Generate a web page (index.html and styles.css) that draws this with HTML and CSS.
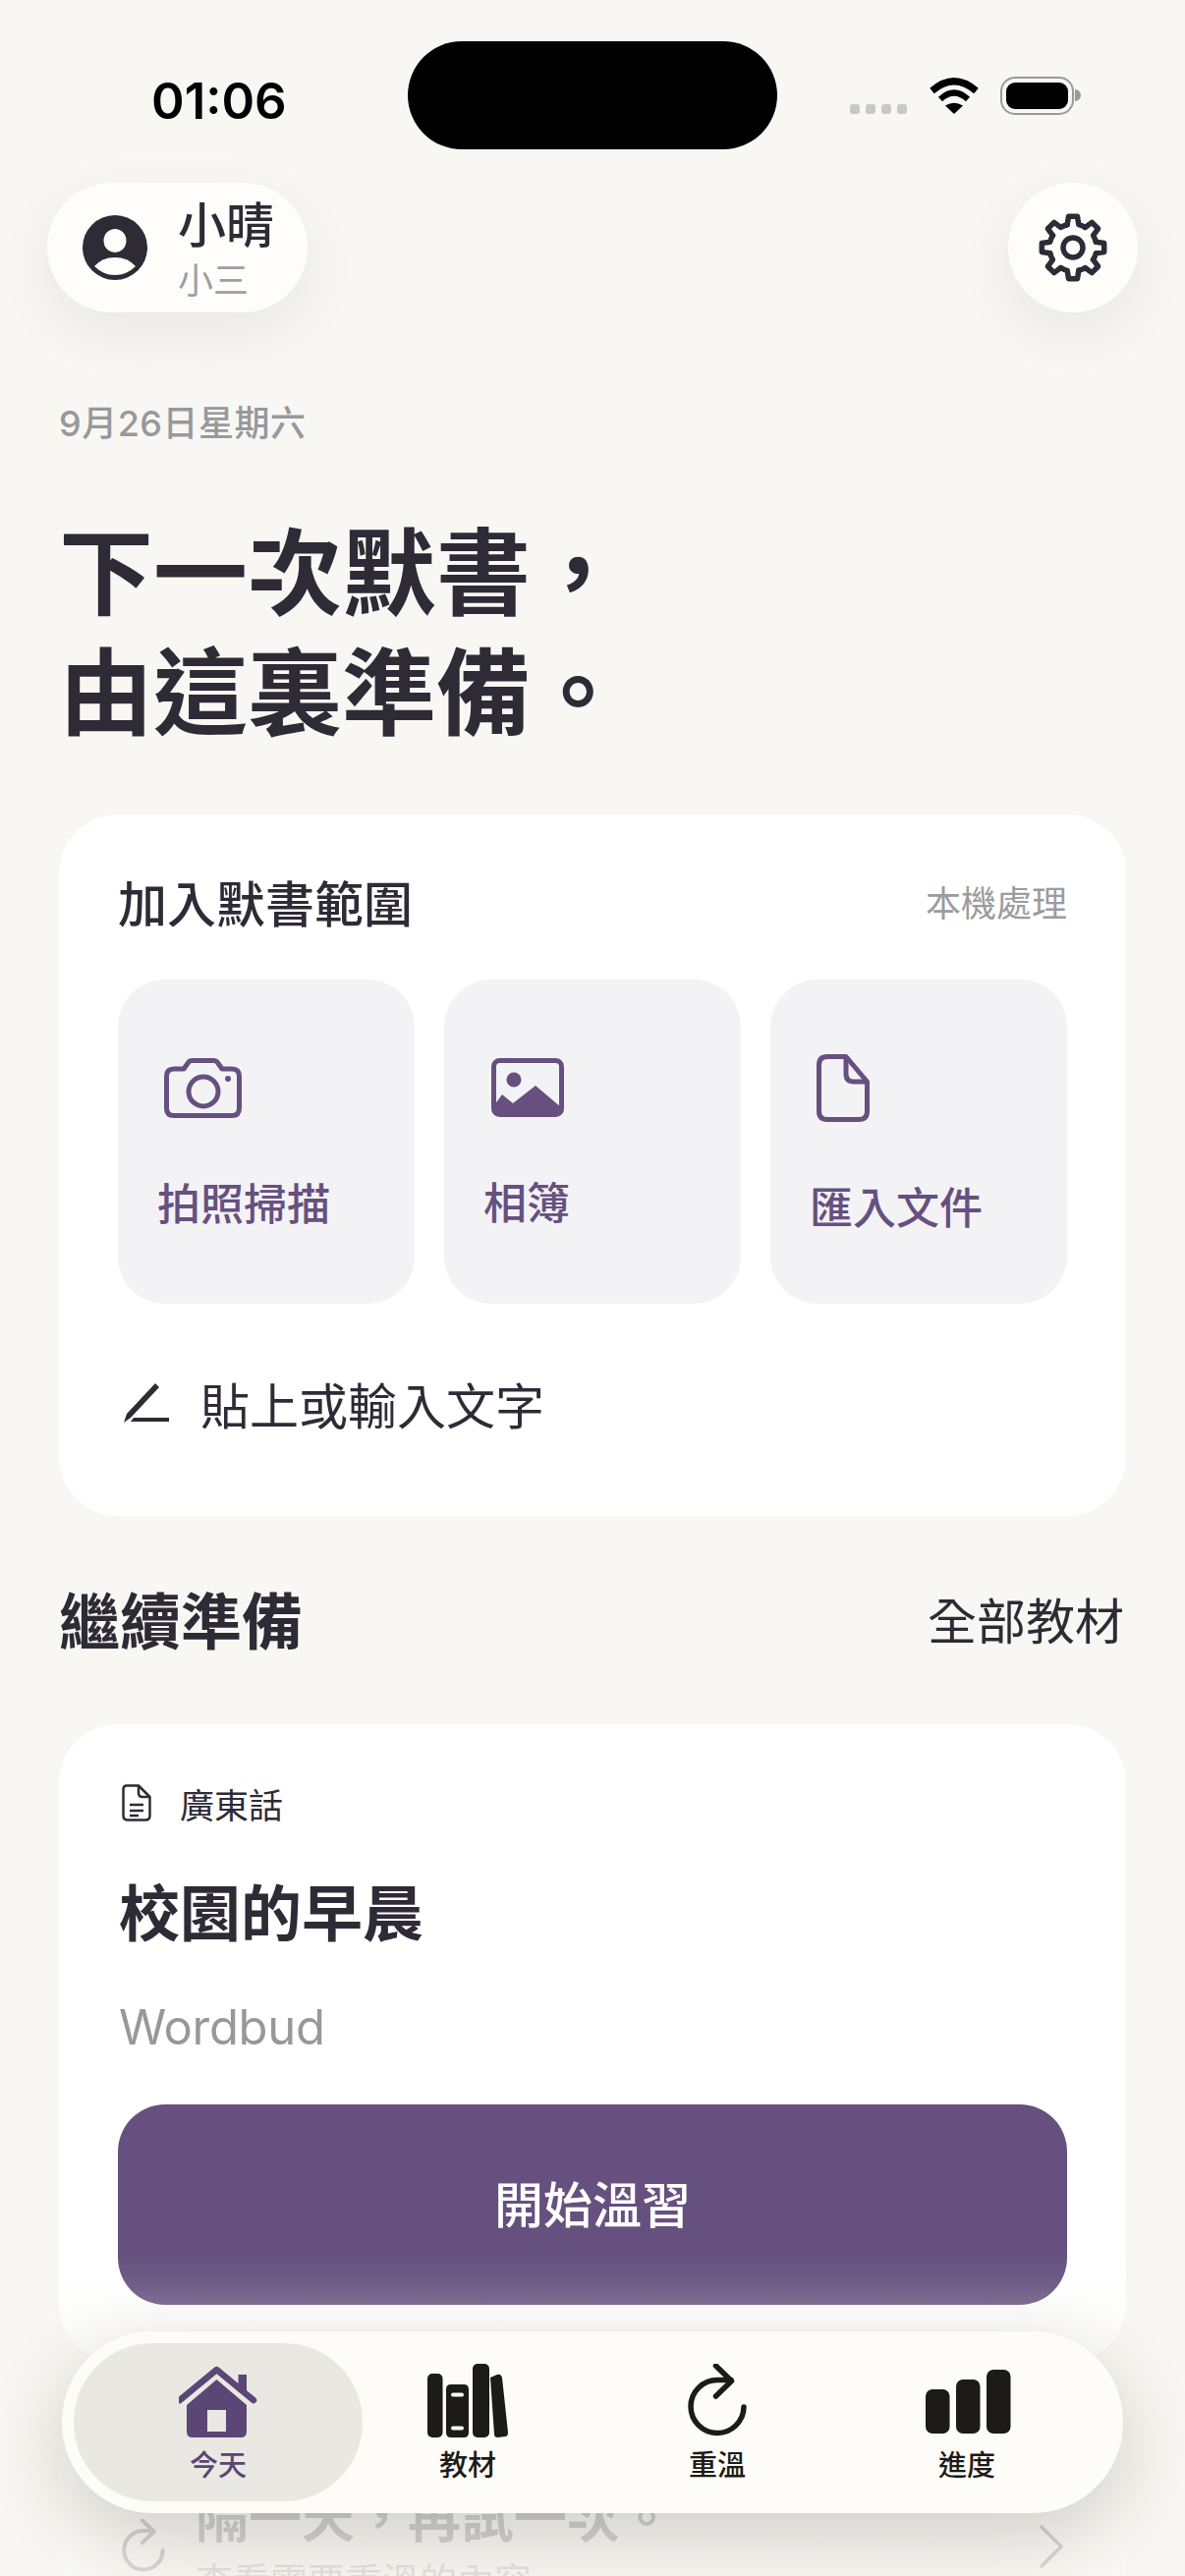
FILE: index.html
```html
<!DOCTYPE html>
<html lang="zh-Hant">
<head>
    <meta charset="UTF-8">
    <meta name="viewport" content="width=device-width, initial-scale=1.0">
    <title>Wordbud</title>
    <link rel="stylesheet" href="styles.css">
</head>
<body>
<div class="page">
    <div class="status">
        <div class="status-time">01:06</div>
        <div class="island"></div>
        <div class="status-icons">
            <div class="dots"><span></span><span></span><span></span><span></span></div>
            <svg class="wifi" width="50" height="37" viewBox="0 0 50 37">
                <path d="M2.5 13.5Q25-6 47.5 13.5" fill="none" stroke="#000" stroke-width="7"/>
                <path d="M11 22Q25 9 39 22" fill="none" stroke="#000" stroke-width="6"/>
                <path d="M25 37L16 28.5Q25 23 34 28.5Z" fill="#000"/>
            </svg>
            <div class="battery"><div class="battery-fill"></div></div>
            <div class="battery-cap"></div>
        </div>
    </div>

    <div class="top-row">
        <div class="profile">
            <svg width="66" height="66" viewBox="0 0 66 66">
                <circle cx="33" cy="33" r="33" fill="#2e2b36"/>
                <ellipse cx="33" cy="26" rx="11.5" ry="12" fill="#fefdfa"/>
                <path d="M12 52Q20 43 33 43Q46 43 54 52Q45 61 33 61Q21 61 12 52Z" fill="#fefdfa"/>
            </svg>
            <div class="profile-text">
                <div class="profile-name">小晴</div>
                <div class="profile-sub">小三</div>
            </div>
        </div>
        <div class="gear-btn">
            <svg width="72" height="72" viewBox="-36 -36 72 72" fill="none" stroke="#2e2b36" stroke-width="5.500" stroke-linejoin="round" stroke-linecap="round">
                <defs><path id="cog" d="M-5.8-23.3L-4.5-31.7H4.5L5.8-23.3A24 24 0 0 1 12.36-20.57"/></defs>
                <use href="#cog"/>
                <use href="#cog" transform="rotate(45)"/>
                <use href="#cog" transform="rotate(90)"/>
                <use href="#cog" transform="rotate(135)"/>
                <use href="#cog" transform="rotate(180)"/>
                <use href="#cog" transform="rotate(225)"/>
                <use href="#cog" transform="rotate(270)"/>
                <use href="#cog" transform="rotate(315)"/>
                <circle r="10"/>
            </svg>
        </div>
    </div>

    <div class="date">9月26日星期六</div>
    <h1 class="headline">下一次默書，<br>由這裏準備。</h1>

    <section class="card add-card">
        <div class="card-head">
            <div class="card-title">加入默書範圍</div>
            <div class="card-note">本機處理</div>
        </div>
        <div class="tiles">
            <div class="tile">
                <svg class="tile-icon icon-camera" width="79" height="61" viewBox="0 0 79 61" fill="none" stroke="#67507f" stroke-width="5">
                    <path d="M10 11H20L25 4Q26 2.5 28 2.5H51Q53 2.5 54 4L59 11H69Q76.500 11 76.500 18.500V51Q76.500 58.500 69 58.500H10Q2.500 58.500 2.500 51V18.500Q2.500 11 10 11Z" stroke-linejoin="round"/>
                    <circle cx="40" cy="34" r="15"/>
                    <circle cx="65" cy="21" r="3" fill="#67507f" stroke="none"/>
                </svg>
                <div class="tile-label">拍照掃描</div>
            </div>
            <div class="tile">
                <svg class="tile-icon icon-photo" width="74" height="60" viewBox="0 0 74 60" fill="none" stroke="#67507f" stroke-width="5">
                    <rect x="2.500" y="2.500" width="69" height="55" rx="6"/>
                    <circle cx="23" cy="22" r="7.500" fill="#67507f" stroke="none"/>
                    <path d="M3 48L11 37L22 46L45 28L71 50V52Q71 57 66 57H8Q3 57 3 52Z" fill="#67507f" stroke="none"/>
                </svg>
                <div class="tile-label">相簿</div>
            </div>
            <div class="tile">
                <svg class="tile-icon icon-doc" width="54" height="69" viewBox="0 0 54 69" fill="none" stroke="#67507f" stroke-width="5" stroke-linejoin="round">
                    <path d="M11 2.500H30L51.500 28V58Q51.500 66.500 43 66.500H11Q2.500 66.500 2.500 58V11Q2.500 2.500 11 2.500Z"/>
                    <path d="M30 2.500V20Q30 28 38 28H51.500"/>
                </svg>
                <div class="tile-label">匯入文件</div>
            </div>
        </div>
        <div class="paste-row">
            <svg width="50" height="42" viewBox="0 0 50 42" fill="#2e2b36">
                <path d="M1 41L4 32L33 1L37 5L8 36Z"/>
                <path d="M11 36H47V40H8Z"/>
            </svg>
            <span>貼上或輸入文字</span>
        </div>
    </section>

    <div class="section-head">
        <h2 class="section-title">繼續準備</h2>
        <div class="section-link">全部教材</div>
    </div>

    <section class="card lesson-card">
        <div class="lesson-tag">
            <svg width="30" height="38" viewBox="0 0 30 38" fill="none" stroke="#2e2b36" stroke-width="2.500" stroke-linejoin="round">
                <path d="M5 1.500H17L28.500 13V32Q28.500 36.500 24 36.500H6Q1.500 36.500 1.500 32V5Q1.500 1.500 5 1.500Z"/>
                <path d="M17 1.500V9Q17 13 21 13H28.500"/>
                <path d="M8 21H22M8 27H22M8 32H17"/>
            </svg>
            <span>廣東話</span>
        </div>
        <div class="lesson-title">校園的早晨</div>
        <div class="lesson-source">Wordbud</div>
        <div class="start-btn">開始溫習</div>
    </section>

    <section class="card retry-card">
        <svg class="retry-icon" width="44" height="54" viewBox="0 0 60 74" fill="none" stroke="#2e2b36" stroke-width="5.500" stroke-linecap="round" stroke-linejoin="round">
            <path d="M57 44A27 27 0 1 1 30 16.500H44"/>
            <path d="M28.500 2L44.500 17.500L28.500 33"/>
        </svg>
        <div class="retry-text">
            <div class="retry-title">隔一天，再試一次。</div>
            <div class="retry-sub">查看需要重溫的內容</div>
        </div>
        <svg class="chevron" width="24" height="44" viewBox="0 0 24 44" fill="none" stroke="#2e2b36" stroke-width="3.500" stroke-linecap="round" stroke-linejoin="round">
            <path d="M2 2L22 22L2 42"/>
        </svg>
    </section>

    <div class="fade"></div>

    <nav class="tabbar">
        <div class="tab tab-active">
            <svg width="81" height="76" viewBox="2 -3 81 76">
                <path d="M62.500 8H71V26H62.500Z" fill="#5b4676"/>
                <path d="M3 34L40.500 3L78 34" fill="none" stroke="#5b4676" stroke-width="6.500" stroke-linecap="round" stroke-linejoin="round"/>
                <path d="M40.500 13L71 39V66Q71 72 65 72H16Q10 72 10 66V39ZM31 44V66H50V44Z" fill="#5b4676" fill-rule="evenodd"/>
            </svg>
            <span>今天</span>
        </div>
        <div class="tab">
            <svg width="82" height="76" viewBox="0 0 82 76" fill="#1c1b17">
                <rect x="0" y="10" width="15.500" height="65" rx="5"/>
                <path d="M24 21H37Q42 21 42 26V70Q42 75 37 75H24Q19 75 19 70V26Q19 21 24 21ZM26 29.500Q24 29.500 24 31.500T26 33.500H35Q37 33.500 37 31.500T35 29.500ZM26 63.500Q24 63.500 24 65.500T26 67.500H35Q37 67.500 37 65.500T35 63.500Z" fill-rule="evenodd"/>
                <rect x="46" y="0" width="17" height="75" rx="5"/>
                <path d="M64 14L71 11Q75 10 76 14L82 70Q82 74 79 74L72 75Q68 75 68 72Z"/>
            </svg>
            <span>教材</span>
        </div>
        <div class="tab">
            <svg width="60" height="76" viewBox="0 0 60 76" fill="none" stroke="#1c1b17" stroke-width="5.500" stroke-linecap="round" stroke-linejoin="round">
                <path d="M57 44A27 27 0 1 1 30 16.500H44"/>
                <path d="M28.500 2L44.500 17.500L28.500 33"/>
            </svg>
            <span>重溫</span>
        </div>
        <div class="tab">
            <svg class="icon-bars" width="87" height="76" viewBox="0 0 87 76" fill="#1c1b17">
                <rect x="0" y="26" width="24.500" height="45" rx="7"/>
                <rect x="31" y="16" width="24.500" height="55" rx="7"/>
                <rect x="62" y="6" width="24.500" height="65" rx="7"/>
            </svg>
            <span>進度</span>
        </div>
    </nav>
</div>
</body>
</html>
```

FILE: styles.css
```css
* {
    box-sizing: border-box;
}
html, body {
    margin: 0;
    padding: 0;
}
body {
    font-family: "Noto Sans CJK TC", Inter, sans-serif;
    background-color: #f8f7f3;
    color: #2e2b36;
}
.page {
    position: relative;
    width: 1206px;
    height: 2622px;
    overflow: hidden;
}

/* status bar */
.status {
    display: grid;
    grid-template-columns: 415px 376px 1fr;
    height: 152px;
    padding-top: 42px;
}
.status-time {
    padding: 28px 0 0 154px;
    font-family: Inter, sans-serif;
    font-size: 51px;
    line-height: 66px;
    font-weight: 600;
    color: #000;
}
.island {
    height: 110px;
    background-color: #000;
    border-radius: 55px;
}
.status-icons {
    display: flex;
    align-items: flex-start;
    padding: 36px 0 0 74px;
}
.dots {
    display: flex;
    gap: 6px;
    margin-top: 28px;
}
.dots span {
    width: 10px;
    height: 10px;
    border-radius: 3px;
    background-color: #c8c8c4;
}
.wifi {
    margin: 1px 0 0 23px;
}
.battery {
    width: 75px;
    height: 39px;
    margin-left: 22px;
    padding: 4px;
    border: 2px solid #9a9a98;
    border-radius: 15px;
}
.battery-fill {
    height: 100%;
    background-color: #000;
    border-radius: 9px;
}
.battery-cap {
    width: 6px;
    height: 12px;
    margin: 13px 0 0 1px;
    background-color: #9a9a98;
    border-radius: 0 6px 6px 0;
}

/* profile and settings */
.top-row {
    display: flex;
    justify-content: space-between;
    margin-top: 34px;
    padding: 0 48px;
}
.profile {
    display: flex;
    align-items: center;
    gap: 31px;
    width: 265px;
    height: 132px;
    padding-left: 36px;
    background-color: #fefdfa;
    border-radius: 66px;
    box-shadow: 0 20px 60px rgba(40, 35, 25, 0.07);
}
.profile-name {
    font-size: 49px;
    line-height: 52px;
    font-weight: 500;
}
.profile-sub {
    margin-top: 9px;
    font-size: 36px;
    line-height: 44px;
    color: #9e9ea3;
}
.gear-btn {
    display: flex;
    align-items: center;
    justify-content: center;
    width: 132px;
    height: 132px;
    background-color: #fefdfa;
    border-radius: 50%;
    box-shadow: 0 20px 60px rgba(40, 35, 25, 0.07);
}

.date {
    margin: 89px 0 0 60px;
    font-family: Inter, "Noto Sans CJK TC", sans-serif;
    font-size: 36px;
    line-height: 48px;
    font-weight: 500;
    letter-spacing: 0.5px;
    color: #98989d;
}
.headline {
    margin: 61px 0 69px 60px;
    font-size: 96px;
    line-height: 122px;
    font-weight: 700;
}

/* cards */
.card {
    margin: 0 60px;
    background-color: #fff;
    border-radius: 60px;
}
.add-card {
    padding: 58px 60px 80px;
}
.card-head {
    display: flex;
    justify-content: space-between;
    align-items: center;
    height: 60px;
}
.card-title {
    font-size: 50px;
    font-weight: 500;
}
.card-note {
    font-size: 36px;
    color: #9b9ba0;
}
.tiles {
    display: grid;
    grid-template-columns: repeat(3, 1fr);
    gap: 30px;
    margin-top: 50px;
}
.tile {
    display: flex;
    flex-direction: column;
    justify-content: center;
    align-items: flex-start;
    height: 330px;
    padding-left: 40px;
    background-color: #f3f3f6;
    border-radius: 48px;
}
.tile-icon {
    display: block;
    margin-bottom: 60px;
}
.icon-camera {
    margin-left: 7px;
}
.icon-photo {
    margin-left: 8px;
}
.icon-doc {
    margin-left: 7px;
}
.tile-label {
    font-size: 44px;
    line-height: 50px;
    font-weight: 500;
    color: #67507f;
}
.paste-row {
    display: flex;
    align-items: center;
    gap: 29px;
    height: 70px;
    margin-top: 66px;
    padding-left: 5px;
    font-size: 50px;
}

.section-head {
    display: flex;
    justify-content: space-between;
    align-items: center;
    height: 80px;
    margin: 64px 62px 68px 60px;
}
.section-title {
    margin: 0;
    font-size: 62px;
    font-weight: 700;
}
.section-link {
    font-size: 50px;
}

.lesson-card {
    padding: 58px 60px 59px;
}
.lesson-tag {
    display: flex;
    align-items: center;
    gap: 29px;
    height: 44px;
    padding-left: 4px;
    font-size: 35px;
}
.lesson-title {
    margin: 47px 0 0 1px;
    font-size: 62px;
    line-height: 80px;
    font-weight: 700;
}
.lesson-source {
    margin: 50px 0 0 1px;
    font-family: Inter, sans-serif;
    font-size: 49px;
    line-height: 60px;
    letter-spacing: -0.3px;
    color: #97979c;
}
.start-btn {
    margin-top: 48px;
    height: 204px;
    line-height: 198px;
    text-align: center;
    font-size: 50px;
    font-weight: 500;
    color: #fff;
    background-color: #65507f;
    border-radius: 48px;
}

.retry-card {
    display: flex;
    align-items: flex-start;
    margin-top: 30px;
    height: 300px;
    padding: 90px 64px 0;
}
.retry-icon {
    margin-top: 39px;
}
.retry-text {
    margin-left: 31px;
}
.retry-title {
    font-size: 54px;
    line-height: 70px;
    font-weight: 600;
}
.retry-sub {
    margin-top: 5px;
    font-size: 38px;
    line-height: 50px;
    color: #6f6d76;
}
.chevron {
    margin: 45px 0 0 auto;
}

/* bottom fade + tab bar */
.fade {
    position: absolute;
    left: 0;
    right: 0;
    bottom: 0;
    height: 332px;
    background: linear-gradient(to bottom, rgba(248, 247, 243, 0) 0%, rgba(248, 247, 243, 0.05) 8%, rgba(248, 247, 243, 0.2) 18%, rgba(248, 247, 243, 0.78) 70%, rgba(248, 247, 243, 0.85) 100%);
}
.tabbar {
    position: absolute;
    left: 63px;
    top: 2373px;
    display: grid;
    grid-template-columns: repeat(4, 254px);
    width: 1080px;
    height: 185px;
    padding: 12px 32px;
    background-color: #fdfcf8;
    border-radius: 92px;
    box-shadow: 0 24px 80px rgba(40, 35, 25, 0.2);
}
.tab {
    position: relative;
    display: flex;
    flex-direction: column;
    align-items: center;
    padding-top: 21px;
    font-size: 29px;
    line-height: 36px;
    font-weight: 500;
    color: #1c1b17;
}
.tab svg {
    position: relative;
    display: block;
    margin-bottom: 7px;
}
.tab span {
    position: relative;
}
.tab .icon-bars {
    margin-left: 3px;
}
.tab-active {
    color: #5b4676;
}
.tab-active::before {
    content: "";
    position: absolute;
    left: -20px;
    right: -20px;
    top: 0;
    bottom: 0;
    background-color: #eae8e3;
    border-radius: 80px;
}
```
